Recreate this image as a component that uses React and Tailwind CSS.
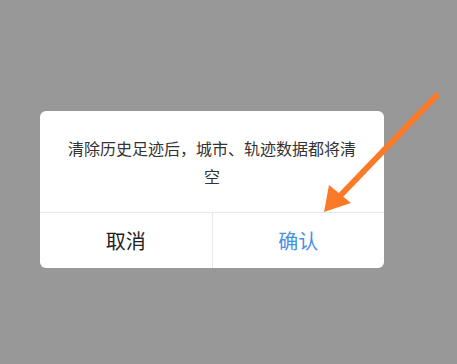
export default function App() {
  const font = { fontFamily: '"Noto Sans CJK SC", "Noto Sans", sans-serif' };
  return (
    <div className="relative w-[457px] h-[364px] bg-[#989898] overflow-hidden" style={font}>
      <div className="pt-[111px] pl-[40px]">
        <div className="w-[344px] bg-white rounded-[6px] overflow-hidden">
          <div className="h-[101px] flex flex-col items-center justify-center pt-[1px]">
            <p className="text-[16px] leading-[28px] text-[#333333] text-center whitespace-nowrap">
              清除历史足迹后，城市、轨迹数据都将清
            </p>
            <p className="text-[16px] leading-[28px] text-[#333333] text-center">空</p>
          </div>
          <div className="h-[56px] border-t border-[#e8e8e8] flex">
            <div className="flex-1 flex items-center justify-center text-[20px] text-[#222222] border-r border-[#e8e8e8]">
              取消
            </div>
            <div className="flex-1 flex items-center justify-center text-[20px] text-[#4a90e2]">
              确认
            </div>
          </div>
        </div>
      </div>
      <svg className="absolute left-0 top-0" width="457" height="364" viewBox="0 0 457 364">
        <line x1="436" y1="96" x2="338" y2="198" stroke="#fa7a28" strokeWidth="6" strokeLinecap="round" />
        <polygon points="324,212 329,185 351,203" fill="#fa7a28" />
      </svg>
    </div>
  );
}
